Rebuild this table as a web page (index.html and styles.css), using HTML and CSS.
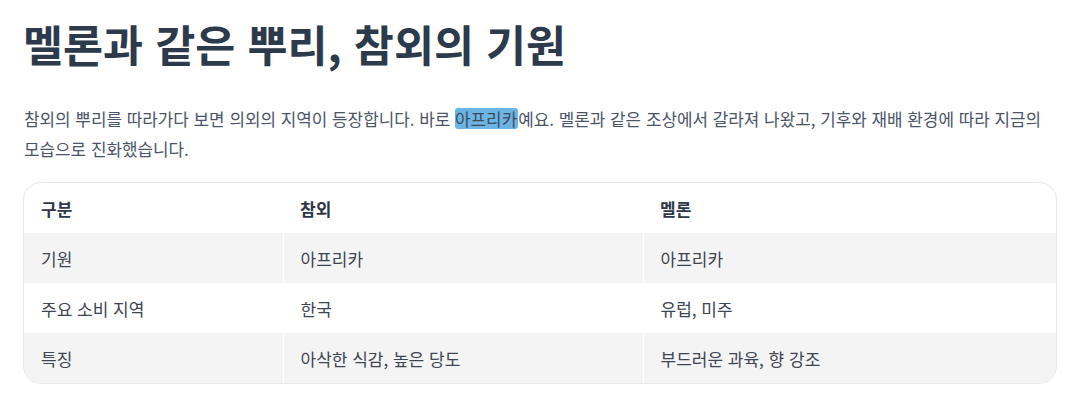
FILE: index.html
```html
<!DOCTYPE html>
<html lang="ko">
<head>
<meta charset="utf-8">
<link rel="stylesheet" href="styles.css">
</head>
<body>
<main class="page">
  <h1 class="title">멜론과 같은 뿌리, 참외의 기원</h1>
  <p class="lead">참외의 뿌리를 따라가다 보면 의외의 지역이 등장합니다. 바로 <mark class="hl">아프리카</mark>예요. 멜론과 같은 조상에서 갈라져 나왔고, 기후와 재배 환경에 따라 지금의 모습으로 진화했습니다.</p>
  <div class="table-wrap">
    <table class="compare">
      <thead>
        <tr><th class="c1">구분</th><th class="c2">참외</th><th class="c3">멜론</th></tr>
      </thead>
      <tbody>
        <tr><td>기원</td><td>아프리카</td><td>아프리카</td></tr>
        <tr><td>주요 소비 지역</td><td>한국</td><td>유럽, 미주</td></tr>
        <tr><td>특징</td><td>아삭한 식감, 높은 당도</td><td>부드러운 과육, 향 강조</td></tr>
      </tbody>
    </table>
  </div>
</main>
</body>
</html>
```
FILE: styles.css
```css
html, body { margin: 0; padding: 0; background: #ffffff; }
body { font-family: "Noto Sans CJK KR", "Noto Sans", sans-serif; }
.page { padding: 0 21px 0 23px; }
.title {
  margin: 0;
  padding-top: 14px;
  font-size: 43.5px;
  line-height: 60px;
  font-weight: 700;
  color: #2d3a4b;
}
.lead {
  margin: 30px 0 0 1px;
  font-size: 16.9px;
  line-height: 30px;
  color: #4a5568;
}
.hl {
  display: inline-block;
  background: #6cb4e4;
  color: #3d4a5c;
  border-radius: 3px;
  line-height: 21px;
  padding: 0 1px 0 0;
}
.table-wrap {
  margin-top: 18px;
  border: 1px solid #e6e8eb;
  border-radius: 18px;
  overflow: hidden;
}
.compare {
  width: 100%;
  border-collapse: collapse;
  font-size: 17px;
  color: #3d4452;
}
.compare th, .compare td {
  height: 50px;
  padding: 0 17px;
  text-align: left;
  vertical-align: middle;
  box-sizing: border-box;
}
.compare th { font-weight: 700; color: #2d3748; }
.compare td + td { border-left: 1px solid #ffffff; }
.compare tbody tr:nth-child(odd) { background: #f4f4f4; }
.c1 { width: 259px; }
.c2 { width: 360px; }
```
